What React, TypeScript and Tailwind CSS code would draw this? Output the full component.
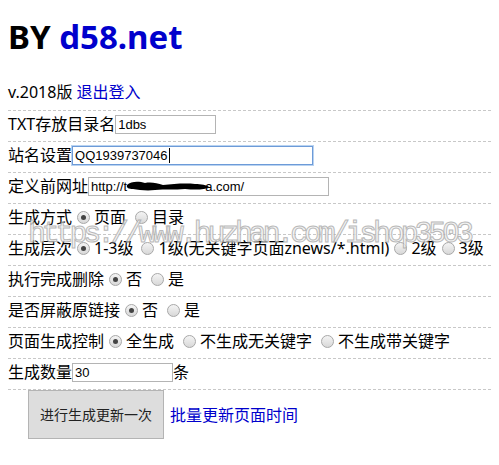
import type { ReactNode } from 'react';

function Radio({ checked = false }: { checked?: boolean }) {
  return (
    <span className="ml-[5px] mr-[4px] inline-flex h-[13px] w-[13px] shrink-0 items-center justify-center rounded-full border border-[#a8a8a8] bg-[linear-gradient(#f4f4f4,#d8d8d8)]">
      {checked && <span className="h-[5px] w-[5px] rounded-full bg-[#444]" />}
    </span>
  );
}

function Field({ value, width, focused = false, children }: { value?: string; width: string; focused?: boolean; children?: ReactNode }) {
  return (
    <span
      className={`relative inline-flex h-[19px] items-center overflow-hidden whitespace-nowrap border bg-white pl-[2px] font-['Liberation_Sans',Arial,sans-serif] text-[13px] leading-none ${width} ${
        focused ? 'border-[#6d9bd8] shadow-[0_0_0_1px_#b9d3f1]' : 'border-[#b4b4b4]'
      }`}
    >
      {value}
      {focused && <span className="ml-px h-[15px] w-px bg-black" />}
      {children}
    </span>
  );
}

function Row({ children }: { children: ReactNode }) {
  return <div className="flex h-[31px] items-center whitespace-nowrap border-t border-dashed border-[#c8c8c8] pb-[4px]">{children}</div>;
}

export default function App() {
  return (
    <div className="relative h-[465px] w-[499px] overflow-hidden bg-white px-2 font-['Noto_Sans','Noto_Sans_CJK_SC',sans-serif] text-[16px] text-black">
      <h1 className="pt-[13px] text-[33px] font-bold leading-[48px]">
        BY <a className="text-[#0000cc]">d58.net</a>
      </h1>

      <div className="mt-[17px] flex h-[32px] items-center pb-[5px]">
        v.2018版&nbsp;<a className="text-[#0000cc]">退出登入</a>
      </div>

      <Row>
        TXT存放目录名
        <Field value="1dbs" width="w-[101px]" />
      </Row>
      <Row>
        站名设置
        <Field value="QQ1939737046" width="w-[241px]" focused />
      </Row>
      <Row>
        定义前网址
        <Field value="http://t" width="w-[241px]">
          <svg width="86" height="12" viewBox="0 0 86 12" className="-ml-[2px]">
            <path
              d="M2 5 C6 1 14 1 20 3 C26 2 32 3 38 5 C48 4 60 3 70 4 C76 4 82 5 84 7 C80 10 70 10 60 9 C50 10 40 9 30 10 C22 11 14 10 8 9 C4 9 1 8 2 5 Z"
              fill="#000"
            />
          </svg>
          <span className="-ml-[6px]">a.com/</span>
        </Field>
      </Row>
      <Row>
        生成方式
        <Radio checked />页面
        <span className="w-[4px]" />
        <Radio />目录
      </Row>
      <Row>
        生成层次
        <Radio checked />1-3级
        <span className="w-[3px]" />
        <Radio />1级(无关键字页面znews/*.html)
        <Radio />2级
        <Radio />3级
      </Row>
      <Row>
        执行完成删除
        <Radio checked />否
        <span className="w-[4px]" />
        <Radio />是
      </Row>
      <Row>
        是否屏蔽原链接
        <Radio checked />否
        <span className="w-[4px]" />
        <Radio />是
      </Row>
      <Row>
        页面生成控制
        <Radio checked />全生成
        <span className="w-[4px]" />
        <Radio />不生成无关键字
        <span className="w-[4px]" />
        <Radio />不生成带关键字
      </Row>
      <Row>
        生成数量
        <Field value="30" width="w-[101px]" />
        条
      </Row>
      <div className="flex items-center border-t border-dashed border-[#c8c8c8]">
        <button className="ml-[20px] h-[49px] w-[136px] border border-[#b4b4b4] bg-[#dddddd] text-[14px] text-[#222]">
          进行生成更新一次
        </button>
        <a className="ml-[6px] text-[#0000cc]">批量更新页面时间</a>
      </div>

      <div className="pointer-events-none absolute left-[28px] top-[216px] font-['Liberation_Mono',monospace] text-[30px] leading-[36px] tracking-[-4.2px] text-[#f2f2f2] opacity-80 [-webkit-text-stroke:1px_#a8a8a8]">
        https://www.huzhan.com/ishop3503
      </div>
    </div>
  );
}
